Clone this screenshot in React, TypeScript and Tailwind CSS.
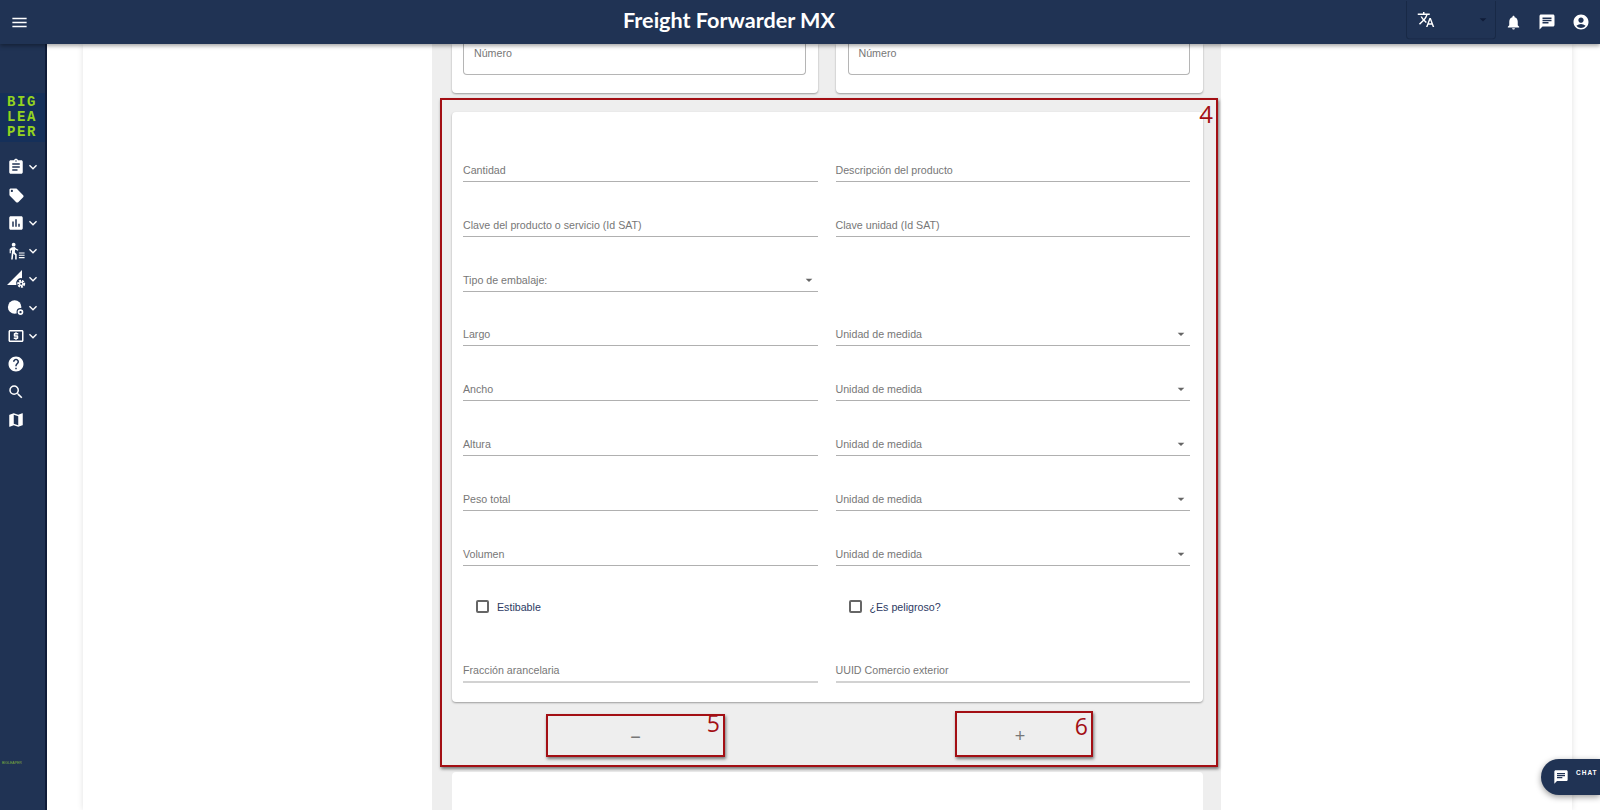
import React from "react";
import {
  MdAccountCircle,
  MdArrowDropDown,
  MdAssessment,
  MdAssignment,
  MdChat,
  MdHelp,
  MdKeyboardArrowDown,
  MdLocalAtm,
  MdLocalOffer,
  MdMap,
  MdMenu,
  MdNotifications,
  MdSearch,
  MdTranslate,
} from "react-icons/md";

const WalkIcon = () => (
  <svg viewBox="0 0 20 20" className="h-[19px] w-[19px]" fill="white">
    <circle cx="7" cy="2.800" r="2" />
    <path d="M5.200 5.500 8.200 5.300l1.300 1.500 2.500 1.300-.5 1-2.900-1.300-.4 3 2 2.200v5.300H8.600v-4.300l-1.900-1.800-.7 6.100H4.400l1-10-1.400.9v2.700H2.800V7.400z" />
    <path d="M12.500 11h6v1.200h-6zM12.500 13.400h6v1.200h-6zM12.500 15.800h6v1.200h-6z" />
  </svg>
);

const RoadGearIcon = () => (
  <svg viewBox="0 0 20 20" className="h-[20px] w-[20px]" fill="white">
    <path d="M16 1v8.200a5 5 0 0 0-5.600 6.800H1z" />
    <circle cx="15.200" cy="14.800" r="3" fill="none" stroke="white" strokeWidth="2" strokeDasharray="2 .9" />
    <circle cx="15.200" cy="14.800" r="2.400" />
    <circle cx="15.200" cy="14.800" r="1" fill="#203354" />
  </svg>
);

const ShieldIcon = () => (
  <svg viewBox="0 0 20 20" className="h-[18px] w-[18px]" fill="white">
    <circle cx="8.500" cy="9" r="7.500" />
    <circle cx="15" cy="14.500" r="3.800" stroke="#203354" strokeWidth="1.200" />
    <circle cx="15" cy="14.500" r="1.300" fill="#203354" />
  </svg>
);

const navItems = [
  { icon: <MdAssignment size={18} />, chevron: true },
  { icon: <MdLocalOffer size={17} />, chevron: false },
  { icon: <MdAssessment size={18} />, chevron: true },
  { icon: <WalkIcon />, chevron: true },
  { icon: <RoadGearIcon />, chevron: true },
  { icon: <ShieldIcon />, chevron: true },
  { icon: <MdLocalAtm size={18} />, chevron: true },
  { icon: <MdHelp size={18} />, chevron: false },
  { icon: <MdSearch size={18} />, chevron: false },
  { icon: <MdMap size={18} />, chevron: false },
];

const Sidebar = () => (
  <aside className="flex w-[47px] shrink-0 flex-col items-stretch border-r-2 border-[#0f1c38] bg-[#203354] pt-[49px]">
    <div className="flex h-[49px] flex-col justify-center bg-[#15305a] pl-[7px] font-['Liberation_Mono',monospace] text-[14px] font-bold leading-[15px] tracking-[1.600px] text-[#93d31f]">
      <span>BIG</span>
      <span>LEA</span>
      <span>PER</span>
    </div>
    <nav className="mt-[11px] flex flex-col">
      {navItems.map((item, i) => (
        <div key={i} className="flex h-[28.100px] items-center text-white">
          <span className="flex w-[32px] justify-center">{item.icon}</span>
          {item.chevron && <MdKeyboardArrowDown size={16} className="-ml-[7px]" />}
        </div>
      ))}
    </nav>
    <div className="mt-[327px] pl-[2px] font-['Liberation_Sans',sans-serif] text-[3.500px] leading-[4px] text-[#7fae3c]">
      BIGLEAPER
    </div>
  </aside>
);

const Header = () => (
  <header className="relative z-10 flex h-[44px] shrink-0 items-center bg-[#203354] text-white shadow-[0_2px_4px_rgba(0,0,0,0.35)]">
    <div className="flex w-[38px] justify-center">
      <MdMenu size={19} />
    </div>
    <h1 className="ml-[584px] w-[214px] -translate-y-[1px] whitespace-nowrap text-center font-['Lato',sans-serif] text-[21.600px] font-bold leading-none">
      Freight Forwarder MX
    </h1>
    <div className="ml-[570px] flex h-[39px] w-[90px] -translate-y-[2.500px] items-center justify-between rounded-b border border-t-0 border-[#182946] pl-[10px] pr-[4px]">
      <MdTranslate size={18} />
      <MdArrowDropDown size={16} className="text-[#0f1c38]" />
    </div>
    <div className="ml-[9px] flex items-center gap-[16px]">
      <MdNotifications size={17} />
      <MdChat size={18} />
      <MdAccountCircle size={18} />
    </div>
  </header>
);

const Field = ({ label, select, light }: { label: string; select?: boolean; light?: boolean }) => (
  <div className="flex h-[54.850px] items-end">
    <div
      className={`flex h-[24px] w-full items-end justify-between pb-[3px] text-[10.670px] text-[#777777] ${
        light ? "border-b-2 border-[#d2d2d2]" : "border-b border-[#b0b0b0]"
      }`}
    >
      <span>{label}</span>
      {select && <MdArrowDropDown size={16} className="mr-[1px] text-[#666666]" />}
    </div>
  </div>
);

const Check = ({ label }: { label: string }) => (
  <div className="flex h-[62px] items-center pl-[13px] pt-[20px] text-[10.670px] text-[#2d3a63]">
    <span className="h-[13px] w-[13px] rounded-[2px] border-2 border-[#666666]" />
    <span className="ml-[8px]">{label}</span>
  </div>
);

const TopCard = ({ className }: { className: string }) => (
  <div className={`h-[49px] flex-1 rounded-b bg-white shadow-[0_1px_2px_rgba(0,0,0,0.35)] ${className}`}>
    <div className="h-[31px] rounded-b border border-t-0 border-[#b5b5b5] pl-[10px] pt-[1px] text-[10.670px] text-[#777777]">
      Número
    </div>
  </div>
);

const rows: [string, boolean, string | null, boolean][] = [
  ["Cantidad", false, "Descripción del producto", false],
  ["Clave del producto o servicio (Id SAT)", false, "Clave unidad (Id SAT)", false],
  ["Tipo de embalaje:", true, null, false],
  ["Largo", false, "Unidad de medida", true],
  ["Ancho", false, "Unidad de medida", true],
  ["Altura", false, "Unidad de medida", true],
  ["Peso total", false, "Unidad de medida", true],
  ["Volumen", false, "Unidad de medida", true],
];

const Marked = ({ n, className, digitClass }: { n: string; className: string; digitClass: string }) => (
  <div className={`relative flex items-center justify-center border-2 border-[#a30f14] pt-[4px] text-[18px] text-[#777777] shadow-[1px_2px_3px_rgba(0,0,0,0.5)] ${className}`}>
    <span>{n === "5" ? "−" : "+"}</span>
    <span className={`absolute right-[3px] font-['Open_Sans',sans-serif] text-[23px] leading-[30px] text-[#a30f14] ${digitClass}`}>
      {n}
    </span>
  </div>
);

export default function App() {
  return (
    <div className="relative flex h-[810px] w-[1600px] flex-col overflow-hidden bg-white font-['Liberation_Sans',Arial,sans-serif]">
      <Header />
      <div className="flex min-h-0 flex-1">
        <Sidebar />
        <main className="min-w-0 flex-1 pl-[36px] pr-[28px]">
          <div className="flex h-full bg-white pl-[349px] shadow-[0_0_6px_rgba(0,0,0,0.12)]">
            <div className="w-[789px] bg-[#eeeeee] pl-[20px] pr-[18px]">
              <div className="flex gap-[18px]">
                <TopCard className="pl-[11px] pr-[12px]" />
                <TopCard className="pl-[12px] pr-[13px]" />
              </div>
              <section className="relative z-[1] -ml-[12px] -mr-[15px] mt-[5px] border-2 border-[#a30f14] px-[10px] pb-[8px] pt-[12px] shadow-[1px_2px_3px_rgba(0,0,0,0.5)]">
                <span className="absolute right-[3px] top-[-1px] font-['Open_Sans',sans-serif] text-[24px] leading-[30px] text-[#a30f14]">
                  4
                </span>
                <div className="h-[590px] w-[751px] rounded bg-white pl-[11px] pr-[13px] pt-[15px] shadow-[0_1px_2px_rgba(0,0,0,0.35)]">
                  <div className="grid grid-cols-2 gap-x-[18px]">
                    {rows.map(([left, leftSelect, right, rightSelect]) => (
                      <React.Fragment key={left}>
                        <Field label={left} select={leftSelect} />
                        {right ? <Field label={right} select={rightSelect} /> : <div />}
                      </React.Fragment>
                    ))}
                    <Check label="Estibable" />
                    <Check label="¿Es peligroso?" />
                    <Field label="Fracción arancelaria" light />
                    <Field label="UUID Comercio exterior" light />
                  </div>
                </div>
                <div className="flex h-[55px] items-end pl-[94px]">
                  <Marked n="5" className="h-[43px] w-[179px]" digitClass="top-[-8px]" />
                  <Marked n="6" className="ml-[230px] h-[46px] w-[138px] pr-[8px]" digitClass="top-[-2px]" />
                </div>
              </section>
              <div className="mt-[5px] h-[60px] w-[751px] rounded-t bg-white" />
            </div>
          </div>
        </main>
      </div>
      <div className="absolute bottom-[15px] right-0 flex h-[36px] w-[59px] items-center rounded-l-full bg-[#203354] pl-[12px] text-white shadow-[0_2px_6px_rgba(0,0,0,0.4)]">
        <MdChat size={16} />
        <span className="ml-[7px] -translate-y-[4px] text-[6.500px] font-bold tracking-[1px]">CHAT</span>
      </div>
    </div>
  );
}
